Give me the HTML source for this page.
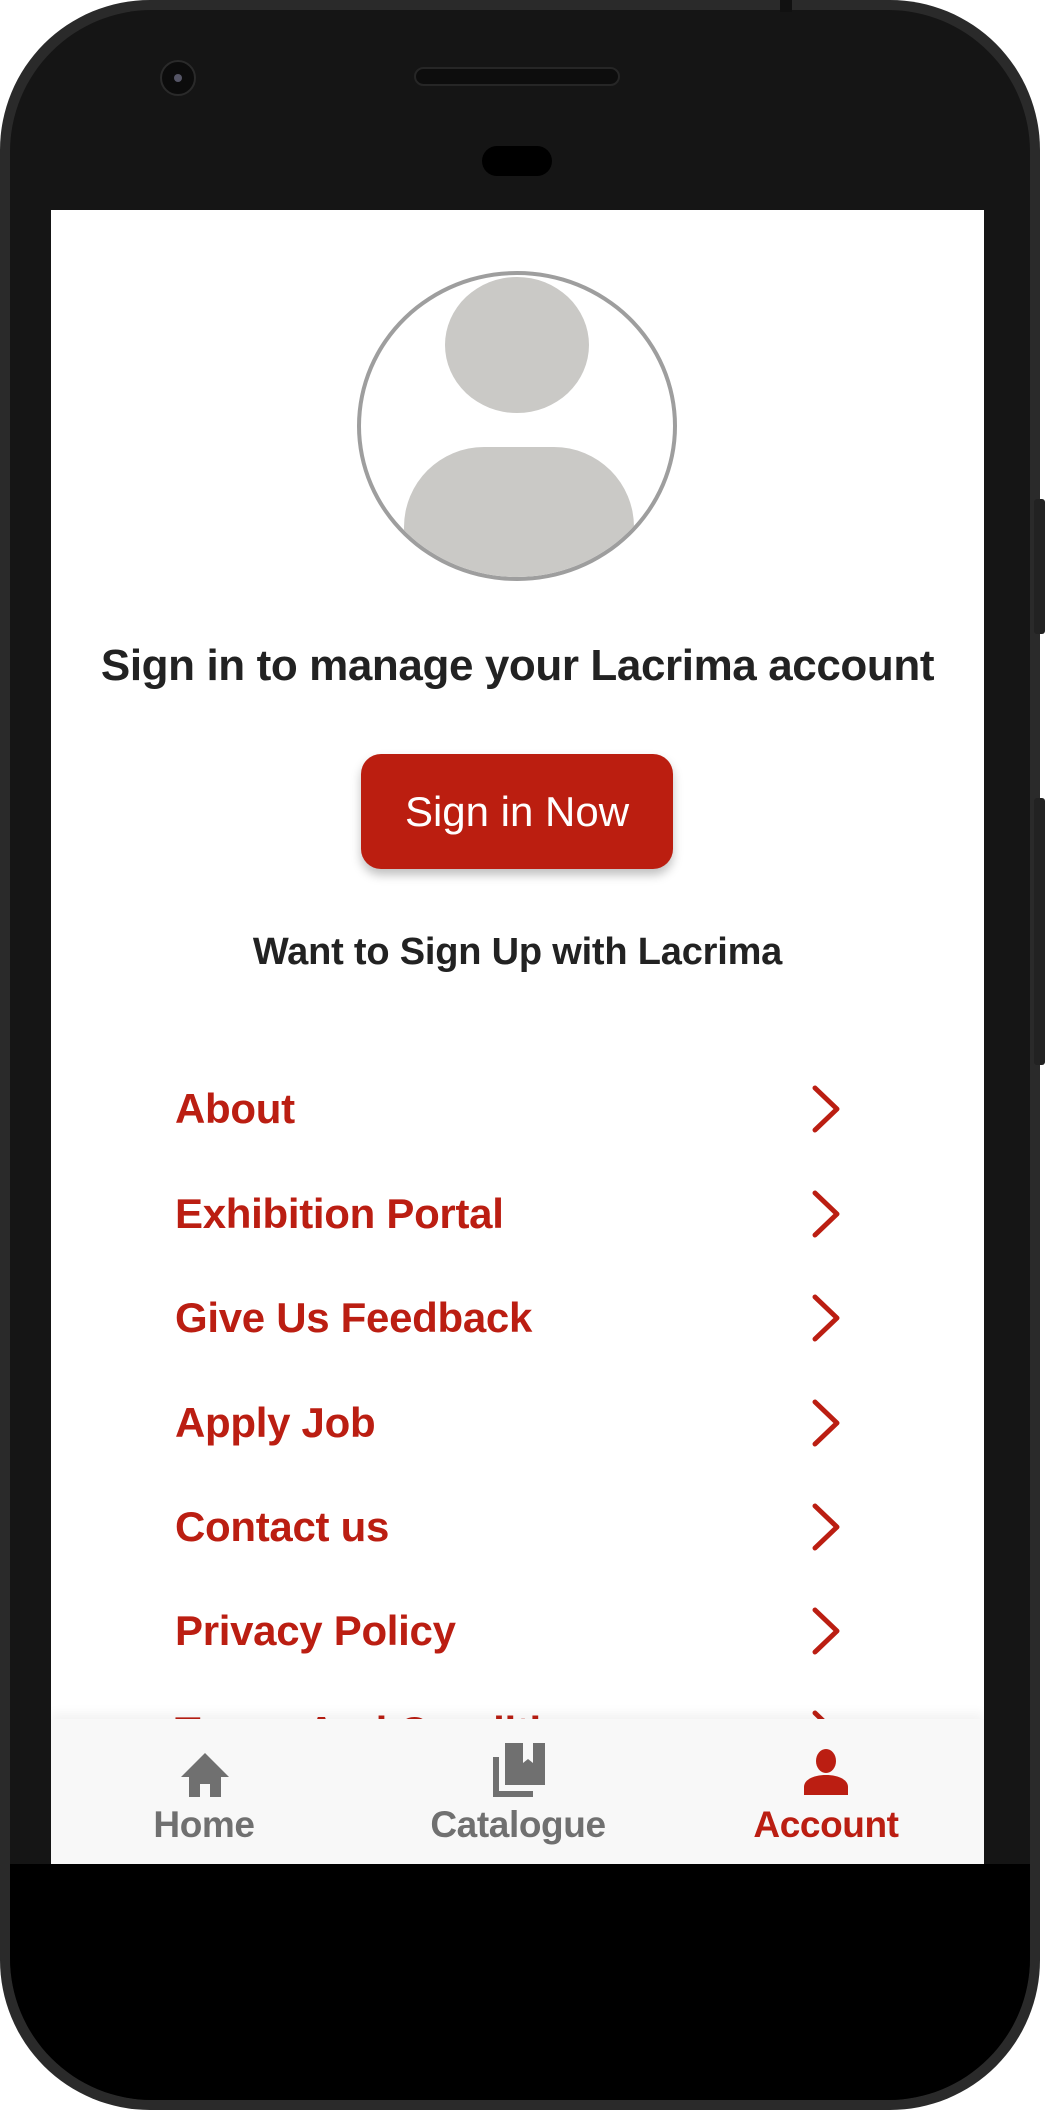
<!DOCTYPE html>
<html><head><meta charset="utf-8">
<style>
*{margin:0;padding:0;box-sizing:border-box}
html,body{width:1046px;height:2114px;background:#fff;overflow:hidden;font-family:"Liberation Sans",Arial,sans-serif}
.phone{position:absolute;left:0;top:0;width:1040px;height:2110px;border-radius:150px;background:#2a2a2a;}
.inner{position:absolute;left:10px;top:10px;width:1020px;height:2090px;border-radius:142px;background:#151515;}
.bottomb{position:absolute;left:10px;top:1864px;width:1020px;height:236px;border-radius:0 0 142px 142px;background:#000;}
.screen{position:absolute;left:51px;top:210px;width:933px;height:1654px;background:#fff;overflow:hidden}
.abs{position:absolute}
.menu{position:absolute;left:124px;font-size:42px;font-weight:bold;color:#bb1e12;letter-spacing:-0.3px;line-height:44px}
.chev{position:absolute;left:758px;width:36px;height:48px}
.nav{position:absolute;left:0;top:1509px;width:933px;height:145px;background:#f8f8f8;box-shadow:0 -6px 10px rgba(0,0,0,0.05)}
.lbl{position:absolute;top:86px;font-size:37px;font-weight:bold;color:#707070;letter-spacing:-0.4px;transform:translateX(-50%);line-height:40px}
</style></head><body>
<div class="phone"></div>
<div class="inner"></div>
<div class="bottomb"></div>
<div class="abs" style="left:780px;top:0;width:12px;height:12px;background:#111"></div>
<div class="abs" style="left:1034px;top:499px;width:11px;height:135px;background:#222;border-radius:3px"></div>
<div class="abs" style="left:1034px;top:798px;width:11px;height:267px;background:#222;border-radius:3px"></div>
<div class="abs" style="left:160px;top:60px;width:36px;height:36px;border-radius:50%;background:#0c0c0c;border:2px solid #2a2a2a"></div>
<div class="abs" style="left:174px;top:74px;width:8px;height:8px;border-radius:50%;background:#556"></div>
<div class="abs" style="left:414px;top:67px;width:206px;height:19px;border-radius:10px;background:#0d0d0d;border:2px solid #262626"></div>
<div class="abs" style="left:482px;top:146px;width:70px;height:30px;border-radius:15px;background:#000"></div>

<div class="screen">
  <div class="abs" style="left:306px;top:61px;width:320px;height:310px;border-radius:50%;border:4px solid #9e9e9e;overflow:hidden">
    <div class="abs" style="left:84px;top:2px;width:144px;height:136px;border-radius:50%;background:#cac9c6"></div>
    <div class="abs" style="left:43px;top:172px;width:230px;height:160px;border-radius:80px 80px 0 0;background:#cac9c6"></div>
  </div>
  <div class="abs" style="left:-20px;top:432px;width:973px;text-align:center;font-size:44px;font-weight:bold;color:#222;letter-spacing:-0.4px;line-height:48px">Sign in to manage your Lacrima account</div>
  <div class="abs" style="left:310px;top:544px;width:312px;height:115px;border-radius:20px;background:#bb1e10;box-shadow:0 6px 10px rgba(0,0,0,0.25);color:#fff;font-size:42px;text-align:center;line-height:115px">Sign in Now</div>
  <div class="abs" style="left:0;top:720px;width:933px;text-align:center;font-size:38px;font-weight:bold;color:#222;letter-spacing:-0.2px;line-height:44px">Want to Sign Up with Lacrima</div>

  <div class="menu" style="top:877px">About</div>
  <div class="menu" style="top:982px">Exhibition Portal</div>
  <div class="menu" style="top:1086px">Give Us Feedback</div>
  <div class="menu" style="top:1191px">Apply Job</div>
  <div class="menu" style="top:1295px">Contact us</div>
  <div class="menu" style="top:1399px">Privacy Policy</div>
  <div class="menu" style="top:1500px">Terms And Conditions</div>
  <svg class="chev" style="top:875px" viewBox="0 0 36 48"><path d="M6 3 L28 24 L6 45" fill="none" stroke="#bb1e12" stroke-width="5" stroke-linecap="round" stroke-linejoin="round"/></svg>
  <svg class="chev" style="top:980px" viewBox="0 0 36 48"><path d="M6 3 L28 24 L6 45" fill="none" stroke="#bb1e12" stroke-width="5" stroke-linecap="round" stroke-linejoin="round"/></svg>
  <svg class="chev" style="top:1084px" viewBox="0 0 36 48"><path d="M6 3 L28 24 L6 45" fill="none" stroke="#bb1e12" stroke-width="5" stroke-linecap="round" stroke-linejoin="round"/></svg>
  <svg class="chev" style="top:1189px" viewBox="0 0 36 48"><path d="M6 3 L28 24 L6 45" fill="none" stroke="#bb1e12" stroke-width="5" stroke-linecap="round" stroke-linejoin="round"/></svg>
  <svg class="chev" style="top:1293px" viewBox="0 0 36 48"><path d="M6 3 L28 24 L6 45" fill="none" stroke="#bb1e12" stroke-width="5" stroke-linecap="round" stroke-linejoin="round"/></svg>
  <svg class="chev" style="top:1397px" viewBox="0 0 36 48"><path d="M6 3 L28 24 L6 45" fill="none" stroke="#bb1e12" stroke-width="5" stroke-linecap="round" stroke-linejoin="round"/></svg>
  <svg class="chev" style="top:1500px" viewBox="0 0 36 48"><path d="M6 3 L28 24 L6 45" fill="none" stroke="#bb1e12" stroke-width="5" stroke-linecap="round" stroke-linejoin="round"/></svg>

  <div class="nav">
    <svg class="abs" style="left:128px;top:32px" width="52" height="46" viewBox="0 0 52 46"><path d="M26 2 L2 26 L10 26 L10 46 L21 46 L21 33 L31 33 L31 46 L42 46 L42 26 L50 26 Z" fill="#707070"/></svg>
    <div class="lbl" style="left:153px">Home</div>
    <svg class="abs" style="left:440px;top:24px" width="56" height="56" viewBox="0 0 56 56"><path d="M2 14 L8 14 L8 48 L42 48 L42 54 L2 54 Z" fill="#707070"/><path d="M14 0 L54 0 L54 42 L14 42 Z" fill="#707070"/><path d="M32 0 L42 0 L42 20 L37 16 L32 20 Z" fill="#f8f8f8"/></svg>
    <div class="lbl" style="left:467px">Catalogue</div>
    <svg class="abs" style="left:752px;top:30px" width="46" height="46" viewBox="0 0 46 46"><ellipse cx="23" cy="12" rx="10" ry="12" fill="#bb1e12"/><path d="M1 46 L1 38 C1 30 12 26 23 26 C34 26 45 30 45 38 L45 46 Z" fill="#bb1e12"/></svg>
    <div class="lbl" style="left:775px;color:#bb1e12">Account</div>
  </div>
</div>
</body></html>
